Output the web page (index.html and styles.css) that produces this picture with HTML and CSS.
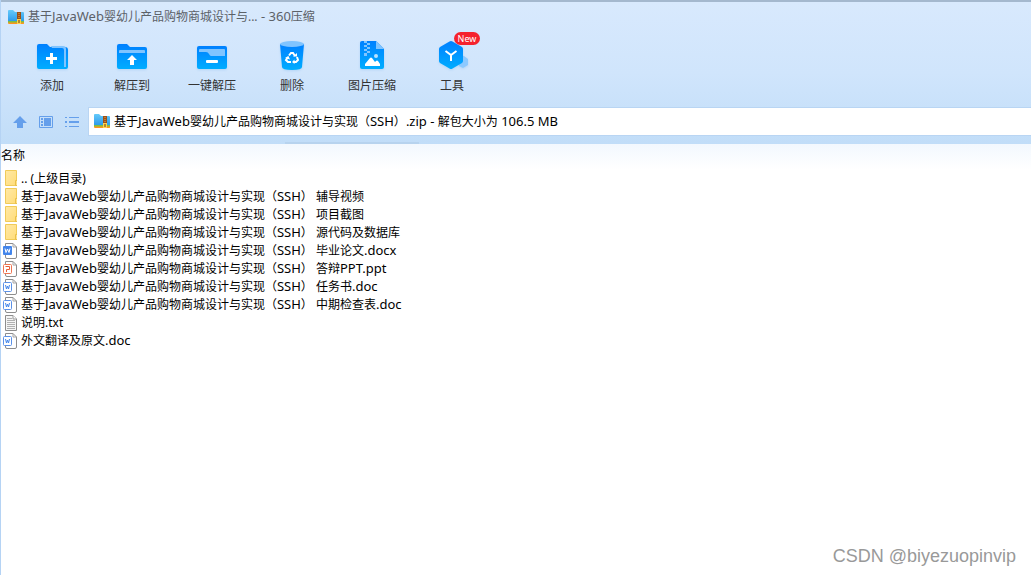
FILE: index.html
```html
<!DOCTYPE html>
<html lang="zh-CN">
<head>
<meta charset="utf-8">
<title>360压缩</title>
<link rel="stylesheet" href="styles.css">
</head>
<body>
<svg class="defs" width="0" height="0" aria-hidden="true">
  <defs>
    <linearGradient id="blue" x1="0" y1="0" x2="0" y2="1"><stop offset="0" stop-color="#0080ff"/><stop offset="1" stop-color="#00adff"/></linearGradient>
    <linearGradient id="sky" x1="0" y1="0" x2="0" y2="1"><stop offset="0" stop-color="#65cafa"/><stop offset="1" stop-color="#2997ea"/></linearGradient>
    <linearGradient id="yellow" x1="0" y1="0" x2="1" y2="1"><stop offset="0" stop-color="#ffe9a6"/><stop offset="1" stop-color="#ffdc78"/></linearGradient>
    <symbol id="archive" viewBox="0 0 16 15">
      <path d="M0 1Q0 0 1 0H5L7 2H15Q16 2 16 3V12H0Z" fill="url(#sky)"/>
      <path d="M0 11H16V13H0Z" fill="#7cc043"/><path d="M0 12.500H16V13.500Q16 14 15 14H1Q0 14 0 13Z" fill="#ff941f"/>
      <path d="M9 2H13V14H9Z" fill="#9b5019"/><path d="M10.500 3H11.500V4H10.500ZM10.500 5H11.500V6H10.500ZM10.500 7H11.500V8H10.500Z" fill="#e5a34d"/>
      <path d="M9 9H13V14H9Z" fill="#ffd24b"/><path d="M10.500 10H11.500V13H10.500Z" fill="#693c17"/>
    </symbol>
    <symbol id="folder" viewBox="0 0 16 18">
      <path d="M4.500 0.500H15.500V15.500H4.500Z" fill="url(#yellow)" stroke="#f0cb59"/><path d="M14.500 15.500V10.500H16.500V15.500Z" fill="#ffe18a" stroke="#e8c04b"/>
    </symbol>
    <symbol id="page" viewBox="0 0 16 18">
      <path d="M4.500 1.500H12L15.500 5V15Q15.500 16.500 14 16.500H6Q4.500 16.500 4.500 15Z" fill="#fff" stroke="#8d8d8d"/><path d="M12 1.500V5H15.500" fill="none" stroke="#a5a5a5"/>
    </symbol>
    <symbol id="docx" viewBox="0 0 16 18">
      <use href="#page"/><rect x="2" y="4" width="9" height="9" rx="1" fill="#4285eb"/><path d="M4 6.500L5 10.500L6.500 7L8 10.500L9 6.500" fill="none" stroke="#fff"/>
    </symbol>
    <symbol id="doc" viewBox="0 0 16 18">
      <use href="#page"/><rect x="2.500" y="4.500" width="8" height="9" rx="1" fill="#fff" stroke="#5b91e8"/><path d="M4.500 7L5.500 11L6.500 8L7.500 11L8.500 7" fill="none" stroke="#4285eb"/>
    </symbol>
    <symbol id="ppt" viewBox="0 0 16 18">
      <use href="#page"/><rect x="2.500" y="4.500" width="8" height="9" rx="1" fill="#fff" stroke="#ef7551"/><path d="M4.500 6.500H8.500V9.500H5.500V12" fill="none" stroke="#e85d35"/>
    </symbol>
    <symbol id="txt" viewBox="0 0 16 18">
      <path d="M4.500 1.500H12L15.500 5V16.500H4.500Z" fill="#f5f5f5" stroke="#8d8d8d"/><path d="M6 4.500H11M6 6.500H14M6 8.500H14M6 10.500H14M6 12.500H14M6 14.500H14" stroke="#b0b0b0"/><path d="M12 1.500V5H15.500" fill="#fff" stroke="#999"/>
    </symbol>
  </defs>
</svg>
<div class="window">
  <header class="chrome">
    <h1 class="title"><svg class="archive"><use href="#archive"/></svg><span>基于<span class="latin">JavaWeb</span>婴幼儿产品购物商城设计与...<span class="latin"> - 360</span>压缩</span></h1>
    <nav class="toolbar">
      <button class="tool" type="button">
        <svg class="tool-icon" viewBox="0 0 32 32"><path d="M1 5Q1 3 3 3H11L14 6H29Q32 6 32 9V26Q32 28 30 28H3Q1 28 1 26Z" fill="url(#blue)"/><path d="M15 5H27Q30 5 30 8V26H28V9Q28 7 26 7H16Z" fill="#80c4ff"/><path d="M14 12H17V16H21V19H17V23H14V19H10V16H14Z" fill="#fff"/></svg>添加</button>
      <button class="tool" type="button">
        <svg class="tool-icon" viewBox="0 0 32 32"><path d="M1 5Q1 3 3 3H11L14 6H29Q31 6 31 8V26Q31 28 29 28H3Q1 28 1 26Z" fill="url(#blue)"/><path d="M3 12V10Q3 9 4 9H28Q29 9 29 10V12Z" fill="#80c4ff"/><path d="M16 14L21 19H18V24H14V19H11Z" fill="#fff"/></svg>解压到</button>
      <button class="tool" type="button">
        <svg class="tool-icon" viewBox="0 0 32 32"><rect x="1" y="5" width="30" height="23" rx="2" fill="url(#blue)"/><path d="M3 10V9Q3 8 4 8H28Q29 8 29 9V15H15Q14 15 13 13Q12 11 10 11H3Z" fill="#80c4ff"/><rect x="10" y="19" width="12" height="3" rx="1" fill="#fff"/></svg>一键解压</button>
      <button class="tool" type="button">
        <svg class="tool-icon" viewBox="0 0 32 32"><path d="M4 3H28L26 26Q26 29 16 29T6 26Z" fill="url(#blue)"/><ellipse cx="16" cy="3" rx="12" ry="3" fill="#80c4ff"/><g fill="none" stroke="#fff" stroke-width="2"><path d="M13 14.500L15 12H17L19 15M21 16L22 19L20 21H18M15 21H12L10 19L12 16"/></g><path d="M17 15.500H21V12ZM18.500 18.500V23L16 21ZM9 17L12.500 15L14 18.500Z" fill="#fff"/></svg>删除</button>
      <button class="tool" type="button">
        <svg class="tool-icon" viewBox="0 0 32 32"><path d="M4 2Q4 0 6 0H20L28 8V26Q28 28 26 28H6Q4 28 4 26Z" fill="url(#blue)"/><path d="M20 0V8H28Z" fill="#80c4ff"/><path d="M8 0H11V2H8ZM11 2H14V4H11ZM8 4H11V6H8ZM11 6H14V8H11ZM8 8H11V10H8ZM11 10H14V12H11ZM8 12H11V15H8Z" fill="#80c4ff"/><circle cx="20" cy="15" r="2" fill="#b9e2ff"/><path d="M9 25V23L14 17Q15 16 16 17L19 21L20 20Q21 19 22 20L24 23V25Z" fill="#fff"/></svg>图片压缩</button>
      <button class="tool" type="button">
        <svg class="tool-icon" viewBox="0 0 32 32"><path d="M24 14L28 15L32 18V24L27 27L23 25V21L27 18Z" fill="#8cc9ff"/><path d="M13.500 0.500Q15 -0.500 16.500 0.500L26 6Q27 7 27 8V20Q27 21 26 22L16.500 27.500Q15 28.500 13.500 27.500L4 22Q3 21 3 20V8Q3 7 4 6Z" fill="url(#blue)"/><path d="M9.500 10L15 14L20.500 10M15 14V20" fill="none" stroke="#fff" stroke-width="2"/></svg>工具<span class="badge">New</span></button>
    </nav>
    <div class="location">
      <div class="views">
        <button class="view" type="button" aria-label="向上"><svg viewBox="0 0 16 16"><path d="M8 2L15 9H11V14H5V9H1Z" fill="#659feb"/></svg></button>
        <button class="view" type="button" aria-label="预览"><svg viewBox="0 0 16 16"><path d="M1.500 2.500H14.500V13.500H1.500Z" fill="none" stroke="#659feb"/><path d="M6 4H13V12H6ZM3 4H5V6H3ZM3 7H5V9H3ZM3 10H5V12H3Z" fill="#659feb"/></svg></button>
        <button class="view" type="button" aria-label="列表"><svg viewBox="0 0 16 16"><path d="M1 3H3V4H1ZM5 3H15V4H5ZM1 7H3V9H1ZM5 7H15V9H5ZM1 12H3V13H1ZM5 12H15V13H5Z" fill="#659feb"/></svg></button>
      </div>
      <div class="address"><svg class="archive"><use href="#archive"/></svg><span>基于<span class="latin">JavaWeb</span>婴幼儿产品购物商城设计与实现（<span class="latin">SSH</span>）<span class="latin">.zip - </span>解包大小为<span class="latin"> 106.5 MB</span></span></div>
    </div>
  </header>
  <main>
    <table class="files">
      <thead><tr><th scope="col">名称</th></tr></thead>
      <tbody>
        <tr><td><div class="file"><svg><use href="#folder"/></svg><span>.. (上级目录)</span></div></td></tr>
        <tr><td><div class="file"><svg><use href="#folder"/></svg><span>基于<span class="latin">JavaWeb</span>婴幼儿产品购物商城设计与实现（<span class="latin">SSH</span>） 辅导视频</span></div></td></tr>
        <tr><td><div class="file"><svg><use href="#folder"/></svg><span>基于<span class="latin">JavaWeb</span>婴幼儿产品购物商城设计与实现（<span class="latin">SSH</span>） 项目截图</span></div></td></tr>
        <tr><td><div class="file"><svg><use href="#folder"/></svg><span>基于<span class="latin">JavaWeb</span>婴幼儿产品购物商城设计与实现（<span class="latin">SSH</span>） 源代码及数据库</span></div></td></tr>
        <tr><td><div class="file"><svg><use href="#docx"/></svg><span>基于<span class="latin">JavaWeb</span>婴幼儿产品购物商城设计与实现（<span class="latin">SSH</span>） 毕业论文<span class="latin">.docx</span></span></div></td></tr>
        <tr><td><div class="file"><svg><use href="#ppt"/></svg><span>基于<span class="latin">JavaWeb</span>婴幼儿产品购物商城设计与实现（<span class="latin">SSH</span>） 答辩<span class="latin">PPT.ppt</span></span></div></td></tr>
        <tr><td><div class="file"><svg><use href="#doc"/></svg><span>基于<span class="latin">JavaWeb</span>婴幼儿产品购物商城设计与实现（<span class="latin">SSH</span>） 任务书<span class="latin">.doc</span></span></div></td></tr>
        <tr><td><div class="file"><svg><use href="#doc"/></svg><span>基于<span class="latin">JavaWeb</span>婴幼儿产品购物商城设计与实现（<span class="latin">SSH</span>） 中期检查表<span class="latin">.doc</span></span></div></td></tr>
        <tr><td><div class="file"><svg><use href="#txt"/></svg><span>说明.txt</span></div></td></tr>
        <tr><td><div class="file"><svg><use href="#doc"/></svg><span>外文翻译及原文<span class="latin">.doc</span></span></div></td></tr>
      </tbody>
    </table>
  </main>
  <div class="watermark">CSDN @biyezuopinvip</div>
</div>
</body>
</html>
```

FILE: styles.css
```css
* { box-sizing: border-box; }
body { margin: 0; background: #fff; color: #000; font: 12px/18px "Noto Sans", "Noto Sans CJK SC", sans-serif; }
button { border: 0; padding: 0; background: none; color: inherit; font: inherit; }
svg { display: block; flex: none; }
.defs { position: absolute; }
.window { position: relative; min-height: 100vh; border-left: 1px solid #b5d3f4; }
.latin { font-size: 13px; line-height: 1; }

.chrome {
  padding-bottom: 8px;
  border-top: 2px solid #a4b8ce;
  background:
    linear-gradient(#b7d3ee, #b7d3ee) 284px 100% / 134px 2px no-repeat,
    linear-gradient(#d8e9fd, #d0e5fc 50%, #c1ddf8);
}
.title { display: flex; align-items: center; gap: 4px; height: 30px; margin: 0; padding-left: 7px; color: #5c6168; font-size: 12px; font-weight: 400; }
.archive { width: 16px; height: 15px; }
.toolbar { display: flex; padding: 9px 0 12px 11px; color: #333; }
.tool { position: relative; display: flex; flex-direction: column; align-items: center; gap: 4px; width: 80px; }
.tool-icon { width: 32px; height: 32px; overflow: visible; filter: drop-shadow(0 1px 1px #86bdf066); }
.badge { position: absolute; top: -9px; left: 42px; width: 26px; height: 13px; border-radius: 7px; background: #f5222d; color: #fff; font-size: 9px; line-height: 13px; text-align: center; }
.location { display: flex; }
.views { display: flex; align-items: center; gap: 10px; padding: 0 8px 0 11px; }
.view svg { width: 16px; height: 16px; }
.address { display: flex; flex: 1; align-items: center; gap: 4px; height: 29px; padding-left: 5px; border: solid #b9d5f3; border-width: 1px 0 1px 1px; background: #fff; }

.files { width: 100%; border-collapse: collapse; }
.files th { height: 26px; padding: 0 0 2px; background: linear-gradient(#f2f8fe, #fff); font-weight: 400; text-align: left; }
.files td { padding: 0; }
.file { display: flex; align-items: center; gap: 4px; height: 18px; white-space: nowrap; }
.file svg { width: 16px; height: 18px; overflow: visible; }
.watermark { position: absolute; right: 15px; bottom: 7px; color: #999; font: 18px/24px "Liberation Sans", Arial, sans-serif; }
```
